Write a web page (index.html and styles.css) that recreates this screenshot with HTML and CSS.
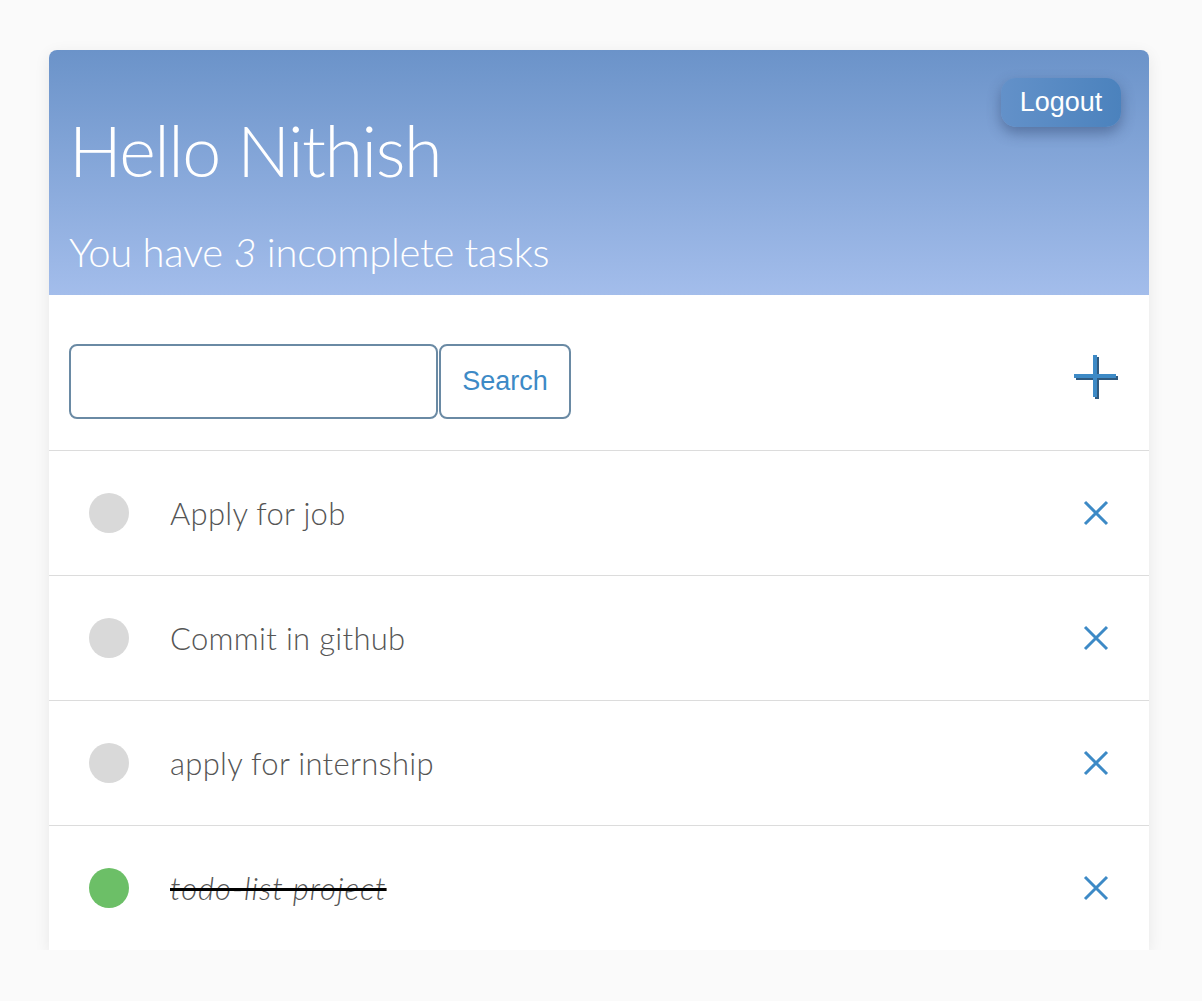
FILE: index.html
```html
<!DOCTYPE html>
<html>
<head>
<meta charset="utf-8">
<link rel="stylesheet" href="styles.css">
</head>
<body>
<div class="card">
  <header class="hero">
    <button class="logout">Logout</button>
    <h1 class="title">Hello Nithish</h1>
    <p class="subtitle">You have <em>3</em> incomplete tasks</p>
  </header>
  <div class="toolbar">
    <div class="search">
      <input class="search-input" type="text">
      <button class="search-btn">Search</button>
    </div>
    <button class="add" aria-label="Add">
      <svg width="46" height="46" viewBox="0 0 46 46">
        <g stroke="#2f5a80" stroke-width="4" fill="none">
          <line x1="24" y1="3" x2="24" y2="45"/>
          <line x1="3" y1="24" x2="45" y2="24"/>
        </g>
        <g stroke="#3d8ac6" stroke-width="4" fill="none">
          <line x1="22" y1="1" x2="22" y2="43"/>
          <line x1="1" y1="22" x2="43" y2="22"/>
        </g>
      </svg>
    </button>
  </div>
  <ul class="tasks">
    <li class="task"><span class="dot"></span><span class="label">Apply for job</span><span class="del"><svg width="26" height="26" viewBox="0 0 26 26"><path d="M2 2L24 24M24 2L2 24" stroke="#3d8ac6" stroke-width="3"/></svg></span></li>
    <li class="task"><span class="dot"></span><span class="label">Commit in github</span><span class="del"><svg width="26" height="26" viewBox="0 0 26 26"><path d="M2 2L24 24M24 2L2 24" stroke="#3d8ac6" stroke-width="3"/></svg></span></li>
    <li class="task"><span class="dot"></span><span class="label">apply for internship</span><span class="del"><svg width="26" height="26" viewBox="0 0 26 26"><path d="M2 2L24 24M24 2L2 24" stroke="#3d8ac6" stroke-width="3"/></svg></span></li>
    <li class="task done"><span class="dot"></span><span class="label">todo-list project</span><span class="del"><svg width="26" height="26" viewBox="0 0 26 26"><path d="M2 2L24 24M24 2L2 24" stroke="#3d8ac6" stroke-width="3"/></svg></span></li>
  </ul>
</div>
</body>
</html>
```
FILE: styles.css
```css
html, body {
  margin: 0;
  padding: 0;
  background: #fafafa;
}
body {
  padding: 50px 53px 0 49px;
  font-family: Lato, "Open Sans", sans-serif;
}
.card {
  width: 1100px;
  background: #fff;
  border-radius: 8px 8px 0 0;
  box-shadow: 0 4px 16px rgba(0,0,0,0.08);
}
.hero {
  position: relative;
  height: 245px;
  box-sizing: border-box;
  padding: 60px 20px 0 20px;
  border-radius: 8px 8px 0 0;
  background: linear-gradient(to bottom, #6b93c9 0%, #a3bdeb 100%);
  color: #fff;
}
.title {
  margin: 0;
  font-family: Lato, sans-serif;
  font-weight: 300;
  font-size: 70px;
  line-height: 80px;
  letter-spacing: -1.5px;
}
.subtitle {
  margin: 40px 0 0 0;
  font-weight: 300;
  font-size: 40px;
  line-height: 44px;
  letter-spacing: -0.3px;
}
.subtitle em {
  font-style: italic;
}
.logout {
  position: absolute;
  top: 28px;
  right: 28px;
  width: 120px;
  height: 49px;
  border: none;
  border-radius: 15px;
  background: linear-gradient(to right, #6391c9, #4b82bd);
  color: #fff;
  font-family: "Liberation Sans", Arial, sans-serif;
  font-size: 27px;
  padding: 0;
  box-shadow: 0 6px 14px rgba(40,60,100,0.45);
}
.toolbar {
  display: flex;
  align-items: center;
  justify-content: space-between;
  height: 156px;
  box-sizing: border-box;
  padding: 17px 30px 0 20px;
  border-bottom: 1px solid #dcdcdc;
}
.search {
  display: flex;
  align-items: center;
}
.search-input {
  width: 369px;
  height: 75px;
  box-sizing: border-box;
  border: 2px solid #6a8aa4;
  border-radius: 8px;
  margin: 0;
}
.search-btn {
  width: 132px;
  height: 75px;
  margin-left: 1px;
  box-sizing: border-box;
  border: 2px solid #6a8aa4;
  border-radius: 8px;
  background: #fff;
  color: #3d8ac6;
  font-family: "Liberation Sans", Arial, sans-serif;
  font-size: 27px;
  padding: 0;
}
.add {
  border: none;
  background: none;
  padding: 0;
  margin-top: -8px;
  display: flex;
}
.tasks {
  list-style: none;
  margin: 0;
  padding: 0;
}
.task {
  display: flex;
  align-items: center;
  height: 124px;
  padding: 0 40px 0 40px;
  border-bottom: 1px solid #dcdcdc;
}
.task:last-child {
  border-bottom: none;
}
.dot {
  width: 40px;
  height: 40px;
  border-radius: 50%;
  background: #d9d9d9;
  flex: none;
}
.done .dot {
  background: #6cbf67;
}
.label {
  flex: 1;
  margin-left: 41px;
  font-family: Lato, sans-serif;
  font-weight: 300;
  font-size: 31px;
  letter-spacing: 0.3px;
  color: #555;
}
.done .label {
  font-style: italic;
  letter-spacing: 1px;
  text-decoration: line-through;
  text-decoration-color: #000;
  text-decoration-thickness: 3px;
}
.del {
  display: flex;
}
```
